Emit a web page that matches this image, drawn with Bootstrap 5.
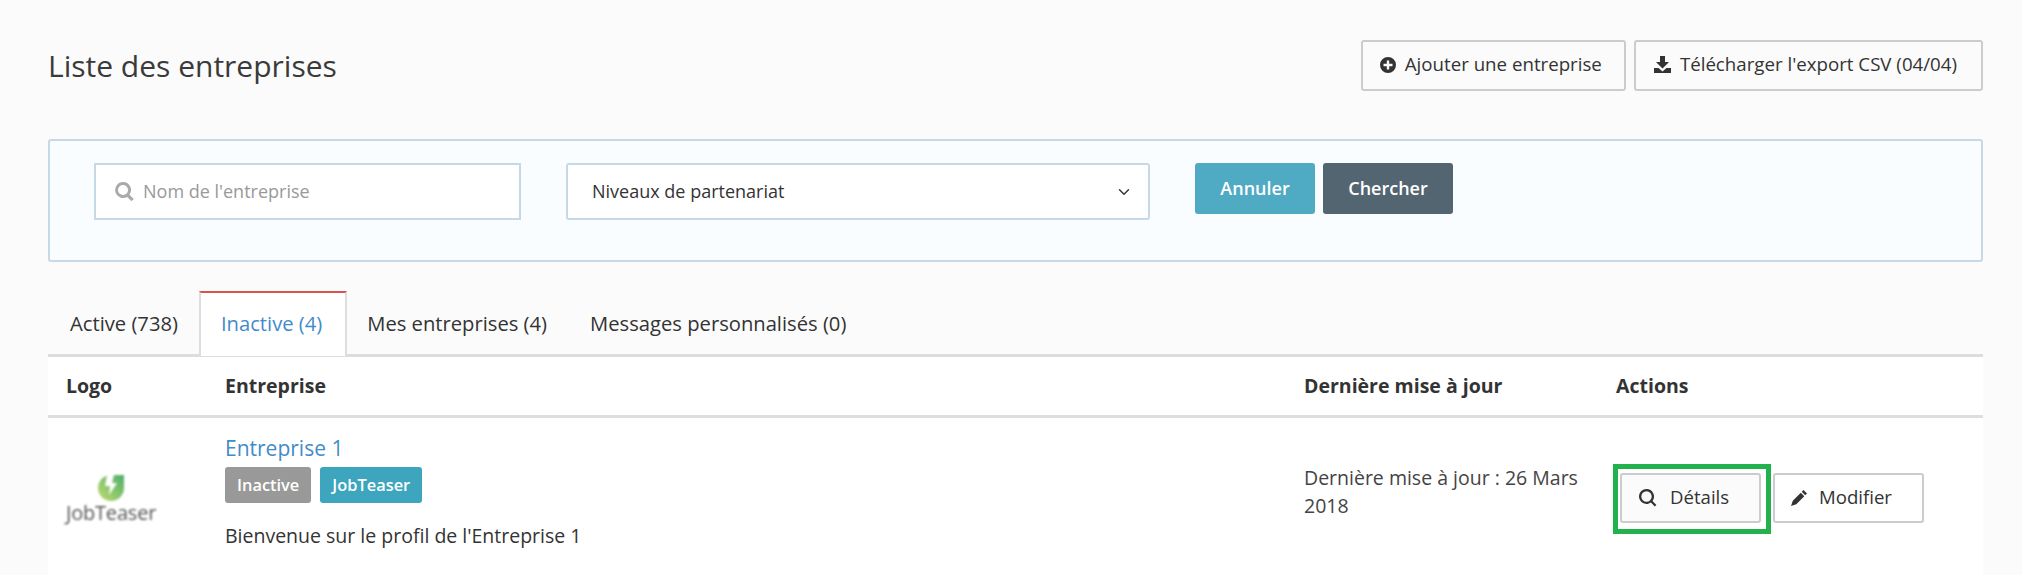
<!DOCTYPE html>
<html lang="fr">
<head>
<meta charset="utf-8">
<title>Liste des entreprises</title>
<link href="https://cdn.jsdelivr.net/npm/bootstrap@5.3.0/dist/css/bootstrap.min.css" rel="stylesheet">
<style>
html,body{height:575px;overflow:hidden}
body{background:#fbfbfb;color:#333;font-family:"Open Sans",sans-serif;font-size:19.5px;line-height:28px}
.page-wrap{padding:40px 39px 0 48px}
.page-head{height:51px;margin-bottom:48px}
.page-title{font-size:30px;font-weight:400;line-height:51px;margin:0;color:#3a3a3a}
.act-btn{background:#fbfbfb;border:2px solid #ccc;border-radius:3px;color:#333;font-size:18.7px;font-weight:500;height:51px;display:inline-flex;align-items:center;gap:9px;line-height:1;padding-bottom:2px}
.act-btn:hover{background:#fbfbfb;border-color:#ccc;color:#333}
.act-btn svg{fill:#333;flex:none}
.add-btn{padding-left:17px;padding-right:22px;padding-top:0}
.export-btn{padding-left:18px;padding-right:24px;padding-top:0}
.filter-panel{background:#f9fdff;border:2px solid #c5d9e6;border-radius:3px;height:123px;padding:22px 44px;margin-bottom:29px}
.search-box{width:427px;height:57px;border:2px solid #c5d9e6;background:#fff;padding:0 19px}
.search-box svg{fill:#aaa;flex:none}
.search-box .form-control{border:0;border-radius:0;box-shadow:none;background:transparent;padding:0 0 0 1px;font-size:18px;color:#333}
.search-box .form-control::placeholder{color:#999}
.filter-select{width:584px;height:57px;margin-left:45px;margin-right:45px;border:2px solid #c5d9e6;border-radius:3px;font-size:18px;color:#333;padding:0 24px;background-color:#fff;background-size:16px 12px;background-position:right 16px center}
.filter-btn{height:51px;border:0;border-radius:3px;color:#fff;font-size:18px;font-weight:600;line-height:1}
.filter-btn:hover{color:#fff}
.btn-cancel,.btn-cancel:hover{background:#4faac3;width:120px;padding:0 0 2px}
.btn-search,.btn-search:hover{background:#546572;margin-left:8px;width:130px;padding:0 0 2px}
.tab-bar{border-bottom:3px solid #ddd;height:66px}
.tab-bar .nav-link{color:#333;font-size:20.2px;line-height:28px;padding:18px 21px 17px 22px;border:0;border-radius:0;margin:0}
.tab-bar .nav-item:nth-child(n+3) .nav-link{padding-left:20px;padding-right:23px}
.tab-bar .nav-link.active{background:#fff;color:#428bca;border:2px solid #ddd;border-top:2px solid #d9534f;border-bottom:0;padding:16px 23px 19px 20px;height:65px;margin-bottom:-2px}
.data-grid{table-layout:fixed;width:1935px;background:#fff;margin:0;--bs-table-bg:#fff;--bs-table-color:#333;color:#333}
.data-grid th{font-size:19.5px;font-weight:700;height:59px;padding:0 18px;vertical-align:middle;border-bottom:3px solid #ddd;line-height:28px}
.data-grid td{padding:15px 18px 25px;vertical-align:top;border:0;font-size:19.5px;line-height:28px}
.col-logo{width:159px}.col-name{width:1079px}.col-date{width:312px}
.data-grid td.logo-cell{padding:57px 0 0 18px}
.data-grid td.date-cell,.data-grid td.actions-cell{padding-top:46px}
.logo-block{width:90px;text-align:center;filter:blur(.8px)}
.logo-block svg{display:block;margin:0 auto}
.logo-word{display:block;font-size:20px;line-height:24px;color:#555;font-weight:500;letter-spacing:-.2px}
.name-link{color:#428bca;text-decoration:none;font-size:21px;line-height:30px;display:block}
.tag{display:inline-block;color:#fff;font-size:16.4px;font-weight:600;line-height:36px;height:36px;padding:0 12px;border-radius:3px;margin-right:9px}
.tag-grey{background:#999}
.tag-teal{background:#3da5bd}
.tag-row{display:flex;height:36px;margin-top:4px;margin-bottom:19px}
.desc-text{margin:0;line-height:28px}
.date-text{display:block;width:290px;color:#444}
.actions-cell{white-space:nowrap}
.action-wrap{display:flex;align-items:flex-start;margin-left:-3px}
.mark-box{border:5px solid #22b14c;padding:4px 5px 6px 2px;display:flex;height:70px;flex:none}
.row-btn{border:2px solid #ccc;border-radius:3px;color:#333;font-size:18.6px;font-weight:500;height:50px;display:inline-flex;align-items:center;line-height:1;padding-bottom:0;padding-top:0}
.row-btn:hover{border-color:#ccc;color:#333}
.row-btn svg{fill:#333;flex:none}
.view-btn,.view-btn:hover{background:#fbfbfb;width:141px;padding-left:17px;padding-right:0;gap:13px}
.edit-btn,.edit-btn:hover{background:#fff;width:151px;padding-left:16px;padding-right:0;gap:12px;margin:9px 0 0 2px}
</style>
</head>
<body>
<div class="page-wrap">
  <div class="page-head d-flex justify-content-between align-items-center">
    <h1 class="page-title">Liste des entreprises</h1>
    <div class="d-flex gap-2">
      <a class="btn act-btn add-btn" href="#"><svg width="16" height="16" viewBox="0 0 16 16"><path fill-rule="evenodd" d="M8 0a8 8 0 1 1 0 16A8 8 0 0 1 8 0zM6.800 3.500v3.300H3.500v2.400h3.300v3.300h2.400V9.200h3.300V6.800H9.200V3.500z"/></svg>Ajouter une entreprise</a>
      <a class="btn act-btn export-btn" href="#"><svg width="17" height="17" viewBox="0 0 17 17"><path d="M6 0h5v6h4l-6.500 6.500L2 6h4zM0 12h4.500l4 3.500 4-3.500H17v5H0z"/></svg>Télécharger l'export CSV (04/04)</a>
    </div>
  </div>

  <form class="filter-panel d-flex align-items-start">
    <div class="search-box d-flex align-items-center gap-2">
      <svg width="19" height="19" viewBox="0 0 19 19"><path fill-rule="evenodd" d="M8 0a8 8 0 0 1 6.500 12.700l4.300 4.300-2.300 2.200-4.300-4.300A8 8 0 1 1 8 0zm0 3a5 5 0 1 0 0 10A5 5 0 0 0 8 3z"/></svg>
      <input class="form-control" type="text" placeholder="Nom de l'entreprise">
    </div>
    <select class="form-select filter-select"><option>Niveaux de partenariat</option></select>
    <button class="btn filter-btn btn-cancel" type="button">Annuler</button>
    <button class="btn filter-btn btn-search" type="button">Chercher</button>
  </form>

  <ul class="nav tab-bar">
    <li class="nav-item"><a class="nav-link" href="#">Active (738)</a></li>
    <li class="nav-item"><a class="nav-link active" href="#">Inactive (4)</a></li>
    <li class="nav-item"><a class="nav-link" href="#">Mes entreprises (4)</a></li>
    <li class="nav-item"><a class="nav-link" href="#">Messages personnalisés (0)</a></li>
  </ul>

  <table class="table data-grid">
    <thead>
      <tr><th class="col-logo">Logo</th><th class="col-name">Entreprise</th><th class="col-date">Dernière mise à jour</th><th>Actions</th></tr>
    </thead>
    <tbody>
      <tr>
        <td class="logo-cell">
          <div class="logo-block">
            <svg width="26" height="26" viewBox="0 0 26 26"><defs><linearGradient id="lg" x1="0" y1="1" x2="1" y2="0"><stop offset="0" stop-color="#c2dc70"/><stop offset="1" stop-color="#4fae6a"/></linearGradient></defs><path fill="url(#lg)" d="M8 1C3 3 0 8 0 13a13 13 0 0 0 26 0V0H15z"/><path fill="#fff" d="M9 0h7l-2 8h5L11 20l1-9H7z"/></svg>
            <span class="logo-word">JobTeaser</span>
          </div>
        </td>
        <td>
          <a class="name-link" href="#">Entreprise 1</a>
          <div class="tag-row"><span class="tag tag-grey">Inactive</span><span class="tag tag-teal">JobTeaser</span></div>
          <p class="desc-text">Bienvenue sur le profil de l'Entreprise 1</p>
        </td>
        <td class="date-cell"><span class="date-text">Dernière mise à jour : 26 Mars 2018</span></td>
        <td class="actions-cell">
          <div class="action-wrap">
            <div class="mark-box">
              <a class="btn row-btn view-btn" href="#"><svg width="18" height="18" viewBox="0 0 18 18"><path fill-rule="evenodd" d="M7.500 0a7.500 7.500 0 0 1 6 12l3.900 3.900-1.600 1.600-3.900-3.900A7.500 7.500 0 1 1 7.500 0zm0 2.300a5.200 5.200 0 1 0 0 10.400 5.200 5.200 0 0 0 0-10.400z"/></svg>Détails</a>
            </div>
            <a class="btn row-btn edit-btn" href="#"><svg width="16" height="16" viewBox="0 0 16 16"><path d="M12.500 0l3.500 3.500-1.800 1.800-3.500-3.500zM9.800 2.700l3.500 3.500-8 8L0 16l1.800-5.300z"/></svg>Modifier</a>
          </div>
        </td>
      </tr>
    </tbody>
  </table>
</div>
<script src="https://cdn.jsdelivr.net/npm/bootstrap@5.3.0/dist/js/bootstrap.bundle.min.js"></script>
</body>
</html>
